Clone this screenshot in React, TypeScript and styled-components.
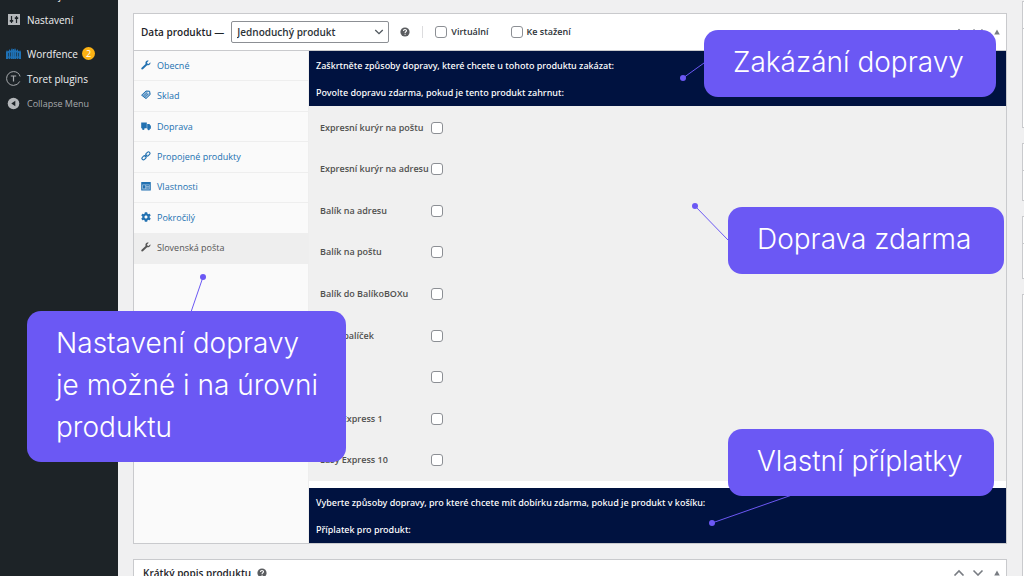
import React from 'react';
import styled, { createGlobalStyle } from 'styled-components';
import { FaCog } from 'react-icons/fa';

const GlobalStyle = createGlobalStyle`
  * { box-sizing: border-box; }
  body {
    margin: 0;
    background: #f0f0f1;
    color: #3c434a;
    font-family: "Open Sans", "Noto Sans", sans-serif;
    font-size: 10px;
    line-height: 14px;
  }
`;

const Page = styled.div`
  position: relative;
  display: flex;
  height: 100vh;
  overflow: hidden;
`;

const Sidebar = styled.nav`
  flex: 0 0 118px;
  background: #1d2327;
`;

const MenuList = styled.ul`
  list-style: none;
  margin: -18px 0 0;
  padding: 0;
`;

const MenuItem = styled.li<{ $spaced?: boolean }>`
  margin-top: ${(p) => (p.$spaced ? 9 : 0)}px;
`;

const MenuLink = styled.a<{ $muted?: boolean }>`
  display: flex;
  align-items: center;
  height: 25px;
  padding-left: 6px;
  color: ${(p) => (p.$muted ? '#a7aaad' : '#f0f0f1')};
  font-size: ${(p) => (p.$muted ? 9 : 10)}px;
  text-decoration: none;
  white-space: nowrap;

  svg {
    flex: none;
    width: 15px;
    height: 15px;
    margin-right: 6px;
  }
`;

const CountBadge = styled.span`
  width: 13px;
  height: 13px;
  margin-left: 4px;
  border-radius: 50%;
  background: #fcb214;
  color: #fff;
  font-size: 9px;
  line-height: 13px;
  text-align: center;
`;

const Main = styled.main`
  flex: 1;
  min-width: 0;
  padding: 13px 15px 0;
`;

const Panel = styled.section`
  margin-bottom: 15px;
  border: 1px solid #c9cacd;
  background: #fff;
`;

const PanelHeader = styled.header<{ $short?: boolean }>`
  display: flex;
  align-items: center;
  height: ${(p) => (p.$short ? 26 : 37)}px;
  padding: 0 3px 0 ${(p) => (p.$short ? 9 : 7)}px;
  border-bottom: 1px solid #c9cacd;
`;

const PanelTitle = styled.h2`
  margin: 0;
  color: #1d2327;
  font-size: 10px;
  font-weight: 600;
  line-height: 14px;
  white-space: nowrap;
`;

const SelectBox = styled.span`
  position: relative;
  display: flex;
  width: 158px;
  margin: 0 5px 0 7px;

  svg {
    position: absolute;
    top: 6px;
    right: 5px;
    width: 10px;
    height: 10px;
    pointer-events: none;
  }
`;

const TypeSelect = styled.select`
  appearance: none;
  width: 100%;
  height: 22px;
  padding: 0 20px 0 5px;
  border: 1px solid #8c8f94;
  border-radius: 2px;
  background: #fff;
  color: #2c3338;
  font: 600 10px/20px "Open Sans", "Noto Sans", sans-serif;
`;

const HelpButton = styled.button`
  display: flex;
  margin-left: 6px;
  padding: 0;
  border: 0;
  background: none;

  svg {
    width: 10px;
    height: 10px;
  }
`;

const Options = styled.div`
  display: flex;
  gap: 22px;
  margin-left: 12px;
  padding-left: 12px;
  border-left: 1px solid #dcdcde;
`;

const OptionLabel = styled.label`
  display: flex;
  align-items: center;
  gap: 4px;
  color: #2c3338;
  font-size: 9px;
  font-weight: 600;
  line-height: 12px;
  white-space: nowrap;
`;

const Checkbox = styled.input`
  appearance: none;
  flex: none;
  width: 12px;
  height: 12px;
  margin: 0;
  border: 1px solid #8c8f94;
  border-radius: 3px;
  background: #fff;
`;

const Handles = styled.div`
  display: flex;
  gap: 7px;
  margin-left: auto;
`;

const HandleButton = styled.button`
  display: flex;
  padding: 0;
  border: 0;
  background: none;

  svg {
    width: 12px;
    height: 12px;
  }
`;

const PanelBody = styled.div`
  display: flex;
`;

const TabColumn = styled.div`
  flex: 0 0 175px;
  border-right: 1px solid #eee;
  background: #fafafa;
`;

const TabList = styled.ul`
  display: grid;
  grid-auto-rows: 1fr;
  height: 213px;
  margin: 0;
  padding: 0;
  list-style: none;
`;

const TabItem = styled.li`
  display: flex;
`;

const TabLink = styled.a<{ $active?: boolean }>`
  display: flex;
  flex: 1;
  align-items: center;
  gap: 6px;
  padding-left: 7px;
  border-bottom: 1px solid #eee;
  background: ${(p) => (p.$active ? '#eeeeee' : 'transparent')};
  color: ${(p) => (p.$active ? '#555' : '#2271b1')};
  font-size: 9px;
  text-decoration: none;

  svg {
    flex: none;
    width: 10px;
    height: 10px;
    margin-bottom: 2px;
  }
`;

const Settings = styled.div`
  flex: 1;
  min-width: 0;
`;

const Banner = styled.div`
  padding: 1px 7px 0;
  background: #001240;
  color: #fff;
  font: 500 9px/27px "Noto Sans", sans-serif;

  p {
    margin: 0;
  }
`;

const CarrierList = styled.div`
  display: grid;
  grid-auto-rows: 1fr;
  height: 375px;
  margin-bottom: 7px;
  padding-top: 1px;
  background: #f0f0f0;
`;

const CarrierRow = styled.div`
  display: grid;
  grid-template-columns: 111px 12px;
  align-items: center;
  padding-left: 11px;

  label {
    color: #50514f;
    font-size: 9px;
    font-weight: 600;
    white-space: nowrap;
  }
`;

const SideColumn = styled.aside`
  flex: 0 0 2px;
  display: flex;
  flex-direction: column;
  gap: 15px;
  padding-top: 1px;
`;

const SideBox = styled.div<{ $height: number }>`
  flex: none;
  height: ${(p) => p.$height}px;
  border: 1px solid #c9cacd;
  border-right: 0;
  background: #fff;
`;

const SideHeader = styled.div`
  height: 27px;
  border-bottom: 1px solid #c9cacd;
`;

const Leaders = styled.svg`
  position: absolute;
  inset: 0;
  width: 100%;
  height: 100%;
  pointer-events: none;
`;

const Callout = styled.div<{ $x: number; $y: number; $w: number }>`
  position: absolute;
  left: ${(p) => p.$x}px;
  top: ${(p) => p.$y}px;
  width: ${(p) => p.$w}px;
  padding: 11px 0 14px 29px;
  border-radius: 14px;
  background: #6b58f4;
  color: #fff;
  font: 300 28px/42px Inter, sans-serif;
  white-space: nowrap;
`;

const ToolsIcon = () => (
  <svg viewBox="0 0 15 15" aria-hidden="true">
    <path d="M3 12l6-7 2 2-6 6z" fill="#a7aaad" />
  </svg>
);

const SlidersIcon = () => (
  <svg viewBox="0 0 15 15" aria-hidden="true">
    <rect x="2" y="2" width="12" height="11" fill="#b4b7ba" />
    <path d="M5.5 4v7M10.5 4v7" stroke="#1d2327" strokeWidth="1.2" />
    <path d="M3.8 8.8h3.4M8.8 6.2h3.4" stroke="#1d2327" strokeWidth="1.8" />
  </svg>
);

const FenceIcon = () => (
  <svg viewBox="0 0 15 15" aria-hidden="true">
    <g fill="#1f71b5">
      <path d="M0 6l1-2 1 2v7H0zM2.6 5l.9-2 .9 2v8H2.6zM5 4l1-2 .8 2v9H5zM8.2 4L9 2l1 2v9H8.2zM10.6 5l.9-2 .9 2v8h-1.8zM13 6l1-2 1 2v7h-2z" />
      <path d="M0 6.5C4 3.5 11 3.5 15 6.5v1.6C11 5.3 4 5.3 0 8.100zM0 10.600h15v1.200H0zM7 3h1v10H7z" />
    </g>
  </svg>
);

const ToretIcon = () => (
  <svg viewBox="0 0 15 15" fill="none" stroke="#a7aaad" aria-hidden="true">
    <circle cx="7.5" cy="7.5" r="6.9" strokeWidth="1" strokeDasharray="38 5" strokeDashoffset="-3" />
    <path d="M4.800 5h5.400M7.500 5v5.500" strokeWidth="1.2" />
  </svg>
);

const CollapseIcon = () => (
  <svg viewBox="0 0 15 15" aria-hidden="true">
    <circle cx="7.5" cy="7.5" r="5.8" fill="#b4b7ba" />
    <path d="M9.300 4.700v5.600L5.300 7.500z" fill="#1d2327" />
  </svg>
);

const WrenchIcon = () => (
  <svg viewBox="0 0 10 10" fill="currentColor" aria-hidden="true">
    <path d="M9.300 2.300L7.600 3.900 6.300 3.600 6 2.400 7.700.7C6.400.3 4.900.9 4.500 2.300c-.2.700-.1 1.200.1 1.700L.6 7.700c-.5.500-.4 1.100 0 1.500s1.100.4 1.600-.1l3.900-3.900c.6.200 1.300.2 1.900-.1 1.200-.5 1.700-1.700 1.300-2.800z" />
  </svg>
);

const TagIcon = () => (
  <svg viewBox="0 0 10 10" aria-hidden="true">
    <path d="M.6 5.200L5 1l3.600.2.600 3.300L5 8.600z" fill="#8fb5d6" stroke="#2271b1" strokeWidth="1" />
    <path d="M2.200 6.200L6 2.800M3.400 7.200L7.200 3.800" stroke="#2271b1" strokeWidth=".7" />
    <circle cx="7.3" cy="2.7" r=".8" fill="#fff" />
  </svg>
);

const TruckIcon = () => (
  <svg viewBox="0 0 10 10" fill="#2271b1" aria-hidden="true">
    <path d="M.2 1.500h5.600v5.700H.2zM6.200 3h2.200L9.900 5v2.800H6.200z" />
    <circle cx="2.300" cy="7.700" r="1.200" />
    <circle cx="7.700" cy="8" r="1.200" />
  </svg>
);

const ChainIcon = () => (
  <svg viewBox="0 0 10 10" fill="none" stroke="#2271b1" strokeWidth="1.100" aria-hidden="true">
    <rect x="-2.300" y="-1.500" width="4.600" height="3" rx="1.500" transform="translate(3 6.800) rotate(-45)" />
    <rect x="-2.300" y="-1.500" width="4.600" height="3" rx="1.500" transform="translate(6.900 2.900) rotate(-45)" />
    <path d="M3.700 6.100L6.200 3.600" />
  </svg>
);

const CardIcon = () => (
  <svg viewBox="0 0 10 10" aria-hidden="true">
    <rect x=".2" y="1" width="9.6" height="8.5" rx=".5" fill="#2271b1" />
    <path d="M1.300 3.500h7.400v5H1.300z" fill="#a9c6e0" />
    <path d="M2 4.300h2.300v3.200H2zM5.200 4.300h2.900v1H5.200zM5.200 6.400h2.900v1H5.200z" fill="#2271b1" />
  </svg>
);

const HelpIcon = () => (
  <svg viewBox="0 0 10 10" aria-hidden="true">
    <circle cx="5" cy="5" r="4.6" fill="#5b5d60" />
    <path d="M3.500 4c0-2 3-1.900 3-.2 0 1-1.400 1-1.400 2.100M5.100 6.700v1.100" fill="none" stroke="#fff" strokeWidth="1.1" />
  </svg>
);

const ChevronIcon = ({ up, dark }: { up?: boolean; dark?: boolean }) => (
  <svg viewBox="0 0 12 12" fill="none" stroke={dark ? '#50575e' : '#787c82'} strokeWidth="1.6" aria-hidden="true">
    <path d={up ? 'M1.500 8.500L6 4l4.500 4.500' : 'M1.500 3.500L6 8l4.500-4.500'} />
  </svg>
);

const TriangleIcon = () => (
  <svg viewBox="0 0 12 12" aria-hidden="true">
    <path d="M6 3.500L8.800 8.500H3.200z" fill="#787c82" />
  </svg>
);

const PanelHandles = () => (
  <Handles>
    <HandleButton type="button" aria-label="Posunout nahoru"><ChevronIcon up /></HandleButton>
    <HandleButton type="button" aria-label="Posunout dolů"><ChevronIcon /></HandleButton>
    <HandleButton type="button" aria-label="Sbalit panel"><TriangleIcon /></HandleButton>
  </Handles>
);

const tabs = [
  { label: 'Obecné', icon: <WrenchIcon /> },
  { label: 'Sklad', icon: <TagIcon /> },
  { label: 'Doprava', icon: <TruckIcon /> },
  { label: 'Propojené produkty', icon: <ChainIcon /> },
  { label: 'Vlastnosti', icon: <CardIcon /> },
  { label: 'Pokročilý', icon: <FaCog /> },
  { label: 'Slovenská pošta', icon: <WrenchIcon />, active: true },
];

const carriers = [
  'Expresní kurýr na poštu',
  'Expresní kurýr na adresu',
  'Balík na adresu',
  'Balík na poštu',
  'Balík do BalíkoBOXu',
  'Malý balíček',
  '',
  'Easy Express 1',
  'Easy Express 10',
];

const leaders = [
  { x1: 683, y1: 78, x2: 704, y2: 63 },
  { x1: 695, y1: 206, x2: 728, y2: 240 },
  { x1: 203, y1: 277, x2: 191, y2: 312 },
  { x1: 712, y1: 523, x2: 792, y2: 495 },
];

export default function App() {
  return (
    <Page>
      <GlobalStyle />
      <Sidebar>
        <MenuList>
          <MenuItem><MenuLink href="#nastroje"><ToolsIcon />Nástroje</MenuLink></MenuItem>
          <MenuItem><MenuLink href="#nastaveni"><SlidersIcon />Nastavení</MenuLink></MenuItem>
          <MenuItem $spaced>
            <MenuLink href="#wordfence"><FenceIcon />Wordfence<CountBadge>2</CountBadge></MenuLink>
          </MenuItem>
          <MenuItem><MenuLink href="#toret"><ToretIcon />Toret plugins</MenuLink></MenuItem>
          <MenuItem><MenuLink href="#collapse" $muted><CollapseIcon />Collapse Menu</MenuLink></MenuItem>
        </MenuList>
      </Sidebar>

      <Main>
        <Panel>
          <PanelHeader>
            <PanelTitle><label htmlFor="product-type">Data produktu —</label></PanelTitle>
            <SelectBox>
              <TypeSelect id="product-type" defaultValue="simple">
                <option value="simple">Jednoduchý produkt</option>
              </TypeSelect>
              <ChevronIcon dark />
            </SelectBox>
            <HelpButton type="button" aria-label="Nápověda"><HelpIcon /></HelpButton>
            <Options>
              <OptionLabel><Checkbox type="checkbox" />Virtuální</OptionLabel>
              <OptionLabel><Checkbox type="checkbox" />Ke stažení</OptionLabel>
            </Options>
            <PanelHandles />
          </PanelHeader>
          <PanelBody>
            <TabColumn>
              <TabList>
                {tabs.map((tab) => (
                  <TabItem key={tab.label}>
                    <TabLink href="#tab" $active={tab.active}>{tab.icon}{tab.label}</TabLink>
                  </TabItem>
                ))}
              </TabList>
            </TabColumn>
            <Settings>
              <Banner>
                <p>Zaškrtněte způsoby dopravy, které chcete u tohoto produktu zakázat:</p>
                <p>Povolte dopravu zdarma, pokud je tento produkt zahrnut:</p>
              </Banner>
              <CarrierList>
                {carriers.map((name, i) => (
                  <CarrierRow key={name}>
                    <label htmlFor={`carrier-${i}`}>{name}</label>
                    <Checkbox type="checkbox" id={`carrier-${i}`} />
                  </CarrierRow>
                ))}
              </CarrierList>
              <Banner>
                <p>Vyberte způsoby dopravy, pro které chcete mít dobírku zdarma, pokud je produkt v košíku:</p>
                <p>Příplatek pro produkt:</p>
              </Banner>
            </Settings>
          </PanelBody>
        </Panel>

        <Panel>
          <PanelHeader $short>
            <PanelTitle>Krátký popis produktu</PanelTitle>
            <HelpButton type="button" aria-label="Nápověda"><HelpIcon /></HelpButton>
            <PanelHandles />
          </PanelHeader>
        </Panel>
      </Main>

      <SideColumn>
        <SideBox $height={127}><SideHeader /></SideBox>
        <SideBox $height={58}><SideHeader /></SideBox>
        <SideBox $height={63}><SideHeader /></SideBox>
        <SideBox $height={300} />
      </SideColumn>

      <Leaders aria-hidden="true">
        {leaders.map((l) => (
          <g key={l.x1} stroke="#6b58f4" fill="#6b58f4">
            <line x1={l.x1} y1={l.y1} x2={l.x2} y2={l.y2} />
            <circle cx={l.x1} cy={l.y1} r="3" stroke="none" />
          </g>
        ))}
      </Leaders>
      <Callout $x={704} $y={30} $w={292}>Zakázání dopravy</Callout>
      <Callout $x={728} $y={207} $w={276}>Doprava zdarma</Callout>
      <Callout $x={27} $y={311} $w={319}>Nastavení dopravy<br />je možné i na úrovni<br />produktu</Callout>
      <Callout $x={728} $y={429} $w={266}>Vlastní příplatky</Callout>
    </Page>
  );
}
